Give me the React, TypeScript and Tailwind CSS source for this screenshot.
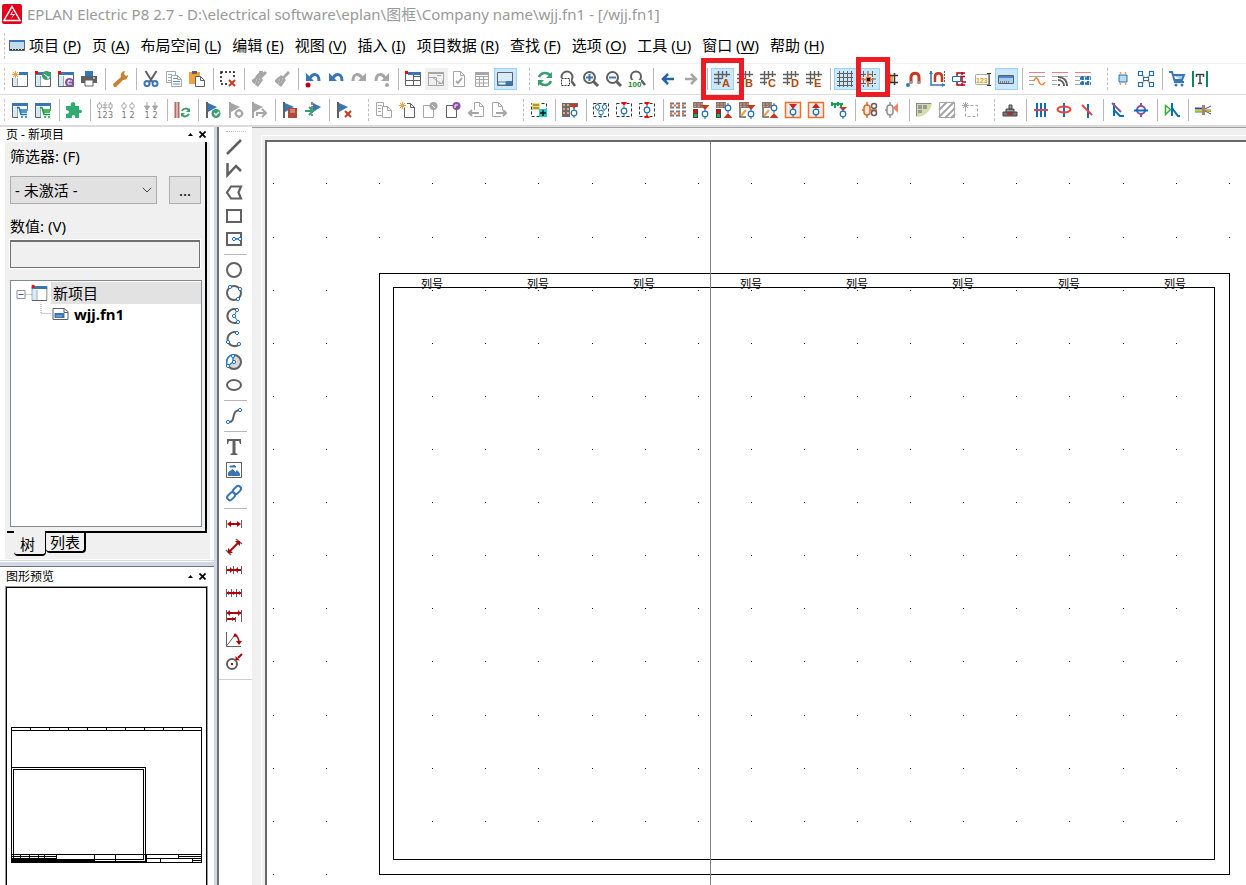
import React from 'react';
import { ChevronDown } from 'lucide-react';

const G = '#606060';
const L = '#a6a6a6';
const B = '#3a76b4';
const C = '#d2ebf9';
const R = '#c8381f';
const O = '#f0a040';
const T = '#0070b8';
const GR = '#3a9f70';

const Spark = ({ x = 0, y = 0, c = O }: { x?: number; y?: number; c?: string }) => (
  <path
    d={`M${x + 3.5} ${y}v7M${x} ${y + 3.5}h7M${x + 1} ${y + 1}l5 5M${x + 6} ${y + 1}l-5 5`}
    stroke={c}
    fill="none"
  />
);

const Win = () => (
  <>
    <path d="M.5 2.500h15v13H.5z" fill="#fff" stroke={G} />
    <path d="M1 5h4v10H1z" fill={C} />
    <path d="M0 1h16v3H0z" fill={B} />
    <path d="M5.500 5v10" stroke={L} />
  </>
);

const RedCorner = () => <path d="M0 0h3v3H0z" fill="red" />;

const Paper = ({ c = G, x = 0, y = 0 }: { c?: string; x?: number; y?: number }) => (
  <path
    d={`M${x + 0.5} ${y + 0.5}h6l4 4v10h-10zM${x + 6.5} ${y + 0.5}v4h4`}
    fill="#fff"
    stroke={c}
  />
);

const Flag = ({ c = B, p = G }: { c?: string; p?: string }) => (
  <>
    <path d="M1 0h2v16H1z" fill={p} />
    <path d="M3 1l9 4-9 5z" fill={c} />
  </>
);

const Cross = () => <path d="M9 9l6 6M15 9l-6 6" stroke={R} strokeWidth="2" />;

const Cart = ({ c = '#1976b8' }: { c?: string }) => (
  <path
    d="M5 5.500h2l2 7h6M8 8h8M8.500 10h6.500M10 14v2M14 14v2"
    stroke={c}
    strokeWidth="1.500"
    fill="none"
  />
);

const Brush = ({ c }: { c: string }) => (
  <>
    <path d="M14 0l2 2-6 6-2-2z" fill={c} />
    <path d="M1 9l6-5 5 5-5 7-6-5z" fill={c} />
    <path d="M5 9h1M7 11h1M4 12h1M8 8h1" stroke="#c8f0b8" />
  </>
);

const Magnifier = () => (
  <>
    <circle cx="6.500" cy="6.500" r="5.500" fill="none" stroke={G} strokeWidth="2" />
    <path d="M10.500 10.500l4.500 4.500" stroke={G} strokeWidth="3" />
  </>
);

const Dot = ({ x, y, r = 1.6 }: { x: number; y: number; r?: number }) => (
  <circle cx={x} cy={y} r={r} fill="#fff" stroke="#1f6fb5" />
);

const GridLetter = ({ l }: { l: string }) => (
  <>
    <path d="M4.500 0v14M8.500 0v8M12.500 0v6M0 3.500h16M0 7.500h8M0 11.500h7" stroke={G} strokeWidth="1.400" fill="none" />
    <text x="8" y="16" fontSize="11" fontWeight="700" fontFamily="Liberation Sans" fill="#b04a0c">
      {l}
    </text>
  </>
);

const Pins = ({ n, mixed, arrow }: { n: number; mixed?: boolean; arrow?: boolean }) => (
  <>
    {Array.from({ length: n }, (_, i) => {
      const x = n === 3 ? 2.5 + i * 5.5 : 4 + i * 8;
      return (
        <g key={i}>
          {arrow ? (
            <path d={`M${x} 0v8M${x - 2.5} 4h5l-2.500 4z`} fill={L} stroke={L} />
          ) : mixed && i === 1 ? (
            <path d={`M${x} 0v8M${x - 2.5} 3h5M${x - 2.5} 5.500h5`} stroke={L} />
          ) : (
            <>
              <path d={`M${x} 0v8`} stroke={L} />
              {mixed && i === 2 ? (
                <path d={`M${x - 1.5} 2h3v4h-3z`} fill="#fff" stroke={L} />
              ) : (
                <circle cx={x} cy="4" r="2.300" fill="#fff" stroke={L} />
              )}
            </>
          )}
          <text x={x} y="16" textAnchor="middle" fontSize="8" fontFamily="DejaVu Sans" fill="#777">
            {i + 1}
          </text>
        </g>
      );
    })}
  </>
);

const Dashed = () => (
  <rect x="0.5" y="1.500" width="15" height="13" fill="none" stroke="#333" strokeDasharray="3 2" />
);

const Strip = () => (
  <>
    <path d="M0 0h10v6H0z" fill="#777" />
    <path d="M1 2h2M4.500 2h2M8 2h2M1 4.500h2M4.500 4.500h2M8 4.500h2" stroke="#f08a60" strokeWidth="1.500" />
  </>
);

const Terminal = ({ x = 8, y = 8 }: { x?: number; y?: number }) => (
  <>
    <path d={`M${x} ${y - 5}v10`} stroke="#1f6fb5" />
    <circle cx={x} cy={y} r="2.800" fill="#fff" stroke="#1f6fb5" strokeWidth="1.200" />
  </>
);

const Device = ({ light, up }: { light?: boolean; up?: boolean }) => (
  <>
    <Strip />
    {light ? (
      <>
        <path d="M0 7h5v9H0z" fill="#444" />
        <path d="M1 8h3v3H1z" fill="red" />
        <path d="M1 12h3v3H1z" fill="#2eb34a" />
      </>
    ) : (
      <>
        <path d="M1 6v9h6" stroke={G} fill="none" strokeWidth="1.500" />
        <path d="M2 14l5-6" stroke={O} strokeWidth="2" />
      </>
    )}
    {up ? (
      <>
        <Terminal x={12} y={6} />
        <path d="M7.500 16l4.500-5 4.500 5z" fill={R} />
      </>
    ) : (
      <>
        <path d="M7.500 3h9L12 8z" fill={R} />
        <Terminal x={12} y={12} />
      </>
    )}
  </>
);

const Lines = () => (
  <>
    <path d="M0 1.500h16" stroke="#f08080" />
    <path d="M0 5.500h16M0 9.500h5M0 13.500h5" stroke={L} />
  </>
);

const DR = '#b00008';

const icons: Record<string, React.ReactNode> = {
  newProject: <><Win /><path d="M0 0h7v7H0z" fill="#fff" /><Spark /></>,
  openProject: <><Win /><RedCorner /><circle cx="11.500" cy="4.500" r="4.500" fill={GR} /><path d="M9 3l5 4M12 7h2V5" stroke="#fff" fill="none" /></>,
  projectProps: <><Win /><RedCorner /><circle cx="11.500" cy="11.500" r="4.500" fill="#8350a5" /><path d="M14 10h-4v3h4M12 9l-2 1" stroke="#fff" fill="none" /></>,
  printer: <><path d="M4 0h8v5H4z" fill={B} /><path d="M0 5h16v7H0z" fill={G} /><path d="M4 9h8v6H4z" fill="#fff" stroke={G} /><path d="M12 7h2" stroke="#fff" /></>,
  wrench: <path d="M1 13l8-7c-1-3 1-6 4-6l-1 3 2 2 2-1c0 4-3 5-5 5l-7 7-2 0z" fill="#c98232" />,
  cut: <><path d="M2.500 0l7 11M13.500 0l-7 11" stroke={G} strokeWidth="2" /><circle cx="4" cy="12.500" r="2.500" fill="none" stroke={B} strokeWidth="2" /><circle cx="12" cy="12.500" r="2.500" fill="none" stroke={B} strokeWidth="2" /></>,
  copy: <><path d="M.5.500h9v11h-9z" fill="#fff" stroke={L} /><path d="M2 3.500h4M2 6.500h3M2 9.500h3" stroke={L} /><path d="M5.500 4.500h6l4 4v7h-10zM11.500 4.500v4h4" fill="#fff" stroke={L} /><path d="M7 7.500h4M7 10.500h7M7 13h7" stroke="#5b92c8" /></>,
  paste: <><path d="M0 1h11v12H0z" fill={O} /><path d="M3 0h5v3H3z" fill={G} /><path d="M6.500 5.500h5l4 4v6h-9zM11.500 5.500v4h4" fill="#fff" stroke={G} /></>,
  deselect: <><rect x="1" y="1" width="13" height="12" fill="none" stroke="#111" strokeWidth="1.500" strokeDasharray="2 2" /><path d="M8 8h8v8H8z" fill="#fff" /><Cross /></>,
  brushMulti: <><Brush c={L} /><path d="M8 1l2 0-5 5M12 1l-4 5" stroke={L} strokeWidth="2" fill="none" /></>,
  brush: <Brush c={L} />,
  undoList: <><path d="M5 7C8 2 14 2 14 10" stroke={B} strokeWidth="3" fill="none" /><path d="M1 2v8h8z" fill={B} /><circle cx="3" cy="14" r="2.500" fill="#c00018" /></>,
  undo: <><path d="M5 7C8 2 14 2 14 10" stroke={B} strokeWidth="3" fill="none" /><path d="M1 2v8h8z" fill={B} /></>,
  redo: <><path d="M11 7C8 2 2 2 2 10" stroke={L} strokeWidth="3" fill="none" /><path d="M15 2v8H7z" fill={L} /></>,
  redoList: <><path d="M11 7C8 2 2 2 2 10" stroke={L} strokeWidth="3" fill="none" /><path d="M15 2v8H7z" fill={L} /><circle cx="13" cy="14" r="2" fill={L} /></>,
  workspace: <><path d="M.5 1.500h15v13H.5zM.5 9.500h15M8.500 3v12M8.500 5.500h7" fill="#fff" stroke={G} /><path d="M3 1h13v3H3z" fill={B} /><RedCorner /></>,
  hideWindow: <><path d="M.5 1.500h15v13H.5zM.5 6.500h8v8M5 7l9 6M10.500 12.500h4v-3M9 4.500h4" fill="none" stroke={L} /><path d="M0 1h16v2H0z" fill={L} /></>,
  checkPage: <><path d="M2.500.500h7l4 4v11h-11zM9.500.500v4h4" fill="#fff" stroke={L} /><path d="M5 10l2 2 4-5" stroke={L} strokeWidth="2" fill="none" /></>,
  table: <><path d="M1.500 1.500h13v14h-13zM1 5.500h13M1 8.500h13M1 12h13M5.500 5v10M9.500 5v10" stroke={L} fill="none" /><path d="M1 1h14v3H1z" fill={L} /></>,
  preview: <><path d="M.5 1.500h15v13H.5z" fill="#d9ecfa" stroke={G} /><path d="M1 11h8v3H1z" fill="#fff" stroke={B} /><path d="M9 10h6v4H9z" fill={B} /></>,
  refresh: <><path d="M2 6c2-5 8-5 11-2M14 10c-2 5-8 5-11 2" stroke={GR} strokeWidth="2.500" fill="none" /><path d="M15 1v6H9zM1 15V9h6z" fill={GR} /></>,
  zoomWindow: <><circle cx="7" cy="6" r="5.500" fill="none" stroke={G} strokeWidth="2" /><path d="M0 7h11v9H0z" fill="#fff" /><path d="M1.500 7.500h8v7h-8z" fill="none" stroke="#333" strokeDasharray="2 1" /><path d="M11.500 10l3.500 5" stroke={G} strokeWidth="2.500" /></>,
  zoomIn: <><Magnifier /><path d="M3 6.500h7M6.500 3v7" stroke={B} strokeWidth="2" /></>,
  zoomOut: <><Magnifier /><path d="M3 6.500h7" stroke={B} strokeWidth="2" /></>,
  zoom100: <><circle cx="7" cy="5.500" r="5" fill="none" stroke={G} strokeWidth="2" /><path d="M12 9l4 5" stroke={G} strokeWidth="2.500" /><path d="M0 9h12v7H0z" fill="#fff" /><text x="-1" y="16" fontSize="8" fontFamily="Liberation Sans" fontWeight="700" fill="#168a28">100</text></>,
  back: <path d="M8 3L3 8l5 5M3 8h11" stroke="#2464a4" strokeWidth="2.500" fill="none" />,
  forward: <path d="M8 3l5 5-5 5M13 8H2" stroke={L} strokeWidth="2.500" fill="none" />,
  gridA: <GridLetter l="A" />,
  gridB: <GridLetter l="B" />,
  gridC: <GridLetter l="C" />,
  gridD: <GridLetter l="D" />,
  gridE: <GridLetter l="E" />,
  grid: <path d="M2.500 0v16M6.500 0v16M10.500 0v16M14.500 0v16M0 2.500h16M0 6.500h16M0 10.500h16M0 14.500h16" stroke={G} />,
  gridSnap: <><path d="M3.500 0v16M12.500 0v16M0 3.500h16M0 12.500h16M0 8h3M13 8h3M8 0v3M8 13v3" stroke={G} strokeDasharray="6 1" /><path d="M8 2v13M2 8.500h12" stroke="#f07020" strokeWidth="1.500" /><path d="M6 6h5v5H6z" fill="#f07020" /><path d="M7 7h3v3H7z" fill="#111" /></>,
  align: <><path d="M3 4h7v8H3z" fill={O} /><path d="M11.500 2v12M6.500 2v12M3 4.500h12M3 11.500h12" stroke="#333" strokeWidth="1.500" /></>,
  magnet: <><path d="M5 12V6c0-5 8-5 8 0v6" stroke={R} strokeWidth="3" fill="none" /><path d="M3.500 10h3v3h-3zM11.500 10h3v3h-3z" fill="#999" /><circle cx="2" cy="14" r="2" fill={B} /></>,
  magnetAxis: <><path d="M2 0v14h14" stroke={B} strokeWidth="1.500" fill="none" /><path d="M6 11V6c0-5 7-5 7 0v5" stroke={R} strokeWidth="2.500" fill="none" /><path d="M0 3h4L2 0zM13 12v4l3-2z" fill={B} /><path d="M15.500 0v11" stroke={G} strokeDasharray="2 1" /></>,
  connector: <><path d="M5 5V2h8M5 10v4h8M8 5.500h5M10 5v6M10 11h4M10 1v3M10 12v3" stroke="#b00010" strokeWidth="1.500" fill="none" /><path d="M.5 5.500h8v5h-8z" fill="#fff" stroke="#1f6fb5" /></>,
  numbering: <><rect x=".5" y="3.500" width="14" height="10" rx="1" fill="#fff" stroke={L} /><text x="1" y="12" fontSize="7" fontFamily="Liberation Sans" fontWeight="700" fill="#d8a010">123</text><path d="M12 2.500h4M14 3v11M12 14.500h4" stroke="#333" /></>,
  card: <><path d="M.5 4.500h15v8H.5z" fill="#a8ccf0" stroke={G} /><path d="M1 5h14v2H1z" fill="#4a86d0" /><path d="M2 11h9" stroke="#333" strokeDasharray="1 1" /></>,
  lineWave: <><Lines /><path d="M5 10c2-6 4-2 5 1s4 4 6 0" stroke="#f08030" strokeWidth="1.500" fill="none" /></>,
  lineSignal: <><Lines /><path d="M6 14h2M6 9c3 0 6 2 6 6M6 6c5 0 9 3 9 9" stroke={G} strokeWidth="2" fill="none" /></>,
  lineGrid: <><Lines /><path d="M7.500 5v10M13 5v10M5 7.500h11M5 12.500h11" stroke="#2574b8" strokeWidth="2.500" strokeDasharray="4 1" /></>,
  node: <><path d="M4 4h8v7H4z" fill="#b9dcf0" stroke="#1f6fb5" /><path d="M5.500 1v2M10.500 1v2M5.500 12v2M10.500 12v2" stroke={O} strokeWidth="1.500" /></>,
  nodes: <><path d="M3 3l10 10M13 3L3 13" stroke={O} strokeWidth="1.500" /><path d="M.5.500h4v4h-4zM11.500.500h4v4h-4zM.5 11.500h4v4h-4zM11.500 11.500h4v4h-4zM5.500 6.500h5v3h-5z" fill="#fff" stroke="#1f6fb5" strokeWidth="1.200" /></>,
  shop: <><path d="M0 1h3l3 10h9M4 4h11l-2 5H5" stroke={B} strokeWidth="2" fill="#a9cdea" /><circle cx="7" cy="14" r="1.500" fill={B} /><circle cx="13" cy="14" r="1.500" fill={B} /></>,
  textFrame: <><path d="M0 0h2v16H0zM14 0h2v16h-2z" fill="#0a8a58" /><path d="M4 3.500h8M8 3v10M6 12.500h4M4.500 3v3M11.500 3v3" stroke="#444" strokeWidth="1.500" /></>,

  cartWin: <><Win /><path d="M6 7h10v9H6z" fill="#fff" /><Cart /></>,
  cartWinGreen: <><Win /><path d="M6 7h10v9H6z" fill="#fff" /><Cart c="#149a38" /></>,
  plugin: <path d="M0 4h5c-2-5 6-5 4 0h4v4c4-1 4 4 0 3v5H9c1-4-4-4-3 0H0v-4c4 0 4-4 0-4z" fill="#2faa70" />,
  numberMix: <Pins n={3} mixed />,
  numberPair: <Pins n={2} />,
  numberArrow: <Pins n={2} arrow />,
  syncRows: <><path d="M1.500 0v16M4.500 0v16" stroke="#b26a5e" strokeWidth="2" /><path d="M8 9c1-3 5-3 7-1M15 12c-2 3-5 3-7 1" stroke={GR} strokeWidth="2" fill="none" /><path d="M16 6v4h-4zM7 15v-4h4z" fill={GR} /></>,
  flagCheck: <><Flag /><circle cx="11" cy="11.500" r="4.500" fill={GR} /><path d="M9 11l2 2 3-3" stroke="#fff" strokeWidth="1.500" fill="none" /></>,
  flagGear: <><Flag c={L} p={L} /><circle cx="11" cy="11.500" r="3" fill="#fff" stroke={L} strokeWidth="2" /><path d="M11 7v2M11 14v2M6.500 11.500h2M13.500 11.500h2" stroke={L} strokeWidth="2" /></>,
  flagNext: <><Flag c={L} p={L} /><path d="M6 14v-3h8M11 7l4 4-4 4" stroke={L} strokeWidth="2" fill="none" /></>,
  flagBook: <><Flag /><path d="M6 6h9v10H6z" fill="#b04a38" /><path d="M8 8h5M8 10h5" stroke="#f0c0b0" /></>,
  flagGo: <><path d="M8 1l8 4-8 5z" fill={B} /><path d="M7 0v14" stroke={G} strokeWidth="1.500" strokeDasharray="3 1" /><path d="M0 9h7M4 5l4 4-4 4" stroke={GR} strokeWidth="2" fill="none" /></>,
  flagDelete: <><Flag /><Cross /></>,
  pageList: <><path d="M.5.500h7v13h-7zM2 3.500h4M2 6.500h3M2 9.500h3" stroke={L} fill="#fff" /><path d="M6.500 4.500h5l4 4v7h-9zM11.500 4.500v4h4" fill="#fff" stroke={L} /></>,
  pageNew: <><Paper x={5} y={1} /><path d="M3 0h5v6H3z" fill="#fff" /><Spark /></>,
  pageOpen: <><path d="M1.500 3.500h10v12h-10z" fill="#fff" stroke={L} /><circle cx="11.500" cy="4" r="4" fill={L} /><path d="M10 3l3 3" stroke="#fff" /></>,
  pageProps: <><path d="M1.500 3.500h10v12h-10z" fill="#fff" stroke={G} /><circle cx="11.500" cy="4" r="4" fill="#8350a5" /><path d="M13 3h-3v3" stroke="#fff" fill="none" /></>,
  pagePrev: <><path d="M6.500 8V.500h5l4 4v10h-9V14M11.500.500v4h4" fill="none" stroke={L} /><path d="M4 8l-3 3 3 3M1 11h10" stroke={L} strokeWidth="2" fill="none" /></>,
  pageNext: <><path d="M10 14.500H1.500V.500h6l4 4V8M7.500.500v4h4" fill="none" stroke={L} /><path d="M12 8l3 3-3 3M15 11H5" stroke={L} strokeWidth="2" fill="none" /></>,
  macro: <><Dashed /><path d="M1 1h8v7H1z" fill="#f6d860" /><path d="M2 3h6M2 6h6" stroke="#555" /><path d="M8 7h8v8H8z" fill="#20c8d0" /><path d="M12 8v6M9 11h6" stroke="#111" strokeWidth="1.500" /></>,
  terminals: <><path d="M0 1h16v4H0zM0 5h8v10H0z" fill="#6a6a6a" /><path d="M1 3h2M5 3h2M1 7h2M5 7h2M1 11h2M5 11h2" stroke="#f4a070" strokeWidth="2" /><path d="M8 2h8l-4 5z" fill={R} /><Terminal x={12} y={11} /></>,
  boxThree: <><Dashed /><path d="M5 1v8M11 1v8M8 8v8" stroke="#1f6fb5" /><Dot x={4.500} y={5} r={2.300} /><Dot x={11.500} y={5} r={2.300} /><Dot x={8} y={10.500} r={2.300} /></>,
  boxOne: <><Dashed /><Terminal y={9} /><path d="M5 0h6L8 4z" fill="red" /></>,
  boxTwo: <><Dashed /><Terminal /><path d="M5 0h6L8 3.500zM5 16h6l-3-3.500z" fill="red" /></>,
  stripAll: <><path d="M0 1.500h16M0 5.500h16M0 9.500h16M0 13.500h16" stroke="#777" strokeWidth="2" strokeDasharray="4 2" /><path d="M0 3.500h16M0 11.500h16" stroke="#e86838" strokeWidth="2" strokeDasharray="2 2" /></>,
  dev1: <Device light />,
  dev2: <Device light up />,
  dev3: <Device />,
  dev4: <Device up />,
  frameDown: <><path d="M.5.500h15v15H.5z" fill="#ececec" stroke="#f07028" strokeWidth="1.500" /><Terminal y={10} /><path d="M4 2h8L8 7z" fill="#d02020" /></>,
  frameUp: <><path d="M.5.500h15v15H.5z" fill="#ececec" stroke="#f07028" strokeWidth="1.500" /><Terminal y={10} /><path d="M4 6h8L8 1z" fill="#d02020" /></>,
  coil: <><path d="M0 2h12M1 0v4M4 1v5M7 0v4M10 1v5" stroke="#14a058" strokeWidth="2" /><path d="M8 5h8l-4 4z" fill={R} /><Terminal x={12} y={12} /></>,
  plug: <><path d="M5 0v16M0 8h2M7 8h8" stroke="#d86a28" strokeWidth="1.500" /><rect x="2" y="3" width="6" height="10" rx="3" fill="#fbe5d8" stroke="#d86a28" strokeWidth="1.500" /><circle cx="12" cy="4" r="2.500" fill="#fff" stroke={G} strokeWidth="1.500" /><circle cx="12" cy="11" r="2.500" fill="#fff" stroke={G} strokeWidth="1.500" /></>,
  plugEnd: <><path d="M5 0v16M0 8h2" stroke="#909090" strokeWidth="1.500" /><rect x="2" y="3" width="6" height="10" rx="3" fill="#faf3e8" stroke="#909090" strokeWidth="1.500" /><path d="M13 1v10l-5-5z" fill="#f08068" /></>,
  corner: <><path d="M0 1h16c-1 8-8 14-16 14z" fill="#d5dcaa" /><path d="M0 1h15v1H0zM0 1h1v13H0z" fill="#888" /><path d="M2 3h4v4H2zM7 3h4v4H7zM2 8h4v3H2z" fill="#9a9a9a" /></>,
  hatch: <><path d="M.5.500h15v15H.5z" fill="#fff" stroke={L} /><path d="M0 8l8-8M0 15L15 0M6 16L16 6M12 16l4-4" stroke={L} strokeWidth="2" /></>,
  dashBox: <><path d="M3.500 3.500h12v11h-12z" fill="none" stroke={L} strokeDasharray="3 2" /><path d="M0 0h7v7H0z" fill="#fff" /><Spark c={L} /></>,
  stamp: <><path d="M1 10h14v4H1z" fill="#777" stroke="#444" /><path d="M4 7h8v3H4zM7 3h3v4H7z" fill="#999" stroke="#444" /><path d="M5 11h6v2H5z" fill="#b03030" /></>,
  triple: <><path d="M4 1v14M8 1v14M12 1v14" stroke={T} strokeWidth="2" /><path d="M1 8h14" stroke="#f04040" strokeWidth="2" /></>,
  ring: <><path d="M8 1v14" stroke={T} strokeWidth="2" /><ellipse cx="8" cy="7.500" rx="6.500" ry="3" fill="none" stroke="#f04040" strokeWidth="2" /></>,
  slash: <><path d="M9 2v14" stroke={T} strokeWidth="2" /><path d="M3 3l10 10" stroke="#f04040" strokeWidth="2" /></>,
  angle: <><path d="M4 1v13M4 8l6 6h4" stroke={T} strokeWidth="2" fill="none" /><path d="M2 1l9 9" stroke="#8a50a8" strokeWidth="2" /></>,
  target: <><path d="M8 1v14" stroke="#8a50a8" strokeWidth="2" /><circle cx="8" cy="8" r="4" fill="#fff" stroke="#8a50a8" strokeWidth="2" /><path d="M1 8.500h14" stroke={T} strokeWidth="2" /></>,
  branch: <><path d="M1.500 3.500l5 4-5 5z" fill="#fff" stroke="#30b030" strokeWidth="1.500" /><path d="M8 1v13M8 6l6 8h2" stroke={T} strokeWidth="2" fill="none" /></>,
  cable: <><path d="M0 6.500h8" stroke="#2050c0" strokeWidth="2" /><path d="M0 8.500h8" stroke="#e8c010" strokeWidth="2" /><path d="M0 10h8M10 8.500l6 1" stroke="#20a040" /><path d="M10 7l6-3" stroke="#2050c0" /><path d="M10 8h6" stroke="#e8a010" strokeWidth="1.500" /><path d="M10 9l6 3" stroke="#555" /><path d="M7 3h3v10H7z" fill="#a88070" /></>,

  line: <path d="M1 15L15 1" stroke={G} strokeWidth="2.500" />,
  polyline: <path d="M1.500 1v12L10 4l5 5" stroke={G} strokeWidth="2.500" fill="none" />,
  polygon: <path d="M5 1.500h10l-2.500 6 2.500 6H5l-4-6z" stroke={G} strokeWidth="2.200" fill="none" />,
  rect: <path d="M1 2h14v12H1z" stroke={G} strokeWidth="2" fill="none" />,
  rectCenter: <><path d="M1 2h14v12H1z" stroke={G} strokeWidth="2" fill="none" /><path d="M8 8h6" stroke="#1f6fb5" strokeWidth="1.500" /><Dot x={8} y={8} /><Dot x={14} y={8} /></>,
  circle: <circle cx="8" cy="8" r="7" stroke={G} strokeWidth="2" fill="none" />,
  circle3: <><circle cx="8" cy="8" r="7" stroke={G} strokeWidth="2" fill="none" /><Dot x={4} y={2} /><Dot x={14} y={4} /><Dot x={12} y={14} /></>,
  arcCenter: <><path d="M11 1.500a7 7 0 1 0 0 13" stroke={G} strokeWidth="2" fill="none" /><path d="M11 2L8 8l4 5" stroke="#1f6fb5" fill="none" /><Dot x={11} y={2} /><Dot x={8} y={8} /><Dot x={12} y={14} /></>,
  arc3: <><path d="M11 1.500a7 7 0 1 0 2 12" stroke={G} strokeWidth="2" fill="none" /><Dot x={11} y={2} /><Dot x={2} y={11} /><Dot x={13} y={13} /></>,
  sector: <><circle cx="8" cy="8" r="7" stroke={G} strokeWidth="2" fill="#d8d8d8" /><path d="M2 12A7 7 0 0 1 7 1v7z" fill="#fff" stroke="#2b7ec8" strokeWidth="1.500" /><Dot x={7} y={2} /><Dot x={8} y={8} /><Dot x={2} y={12} /></>,
  ellipse: <ellipse cx="8" cy="8" rx="7" ry="5" stroke={G} strokeWidth="2" fill="none" />,
  spline: <><path d="M2 14c9 1 2-12 12-12" stroke={G} strokeWidth="2" fill="none" /><Dot x={2} y={14} /><Dot x={14} y={2} /></>,
  text: <path d="M1 0h14v5h-1l-1-3H9.500v12l2 1v1h-7v-1l2-1V2H3L2 5H1z" fill={G} />,
  image: <><path d="M.5.500h15v15H.5z" fill="#fff" stroke={G} /><path d="M2.500 13.500v-3l4-3 3 3 1.500-2 2.500 3v2zM4 4h3l1-1 2 2H4z" fill={B} stroke={B} /></>,
  link: <><rect x="6.500" y="2.200" width="9" height="5.500" rx="2.700" transform="rotate(-45 11 5)" fill="none" stroke={B} strokeWidth="2" /><rect x="0.500" y="8.500" width="9" height="5.500" rx="2.700" transform="rotate(-45 5 11)" fill="none" stroke={B} strokeWidth="2" /></>,
  dimLinear: <><path d="M.5 4v8M15.500 4v8" stroke={G} /><path d="M3 8h10" stroke={DR} strokeWidth="2" /><path d="M1 8l4-3v6zM15 8l-4-3v6z" fill={DR} /></>,
  dimAligned: <><path d="M0 11l5 5M10 0l6 5" stroke={G} strokeWidth="1.500" /><path d="M4 12l8-8" stroke={DR} strokeWidth="2" /><path d="M2 14V9l5 5zM14 2v5L9 2z" fill={DR} /></>,
  dimChain: <><path d="M.5 4v8M7.500 4v8M15.500 4v8" stroke={G} /><path d="M1 8h14" stroke={DR} strokeWidth="2" /><path d="M4 5v6l3-3zM12 5v6l-3-3z" fill={DR} /></>,
  dimIncr: <><path d="M.5 4v8M5.500 4v8M10.500 4v8M15.500 4v8" stroke={G} /><path d="M1 8h14" stroke={DR} strokeWidth="2" /><path d="M2 6v4l3-2zM7 6v4l3-2zM14 6v4l-3-2z" fill={DR} /></>,
  dimBase: <><path d="M.5 2v12M15.500 2v12M9.500 9v5" stroke={G} /><path d="M1 5h14M1 11h8" stroke={DR} strokeWidth="2" /><path d="M1 5l3-3v6zM15 5l-3-3v6zM9 11l-3-2v4z" fill={DR} /></>,
  dimAngle: <><path d="M.5 1v14.500H15M.5 15L9 4" stroke={G} fill="none" /><path d="M8 4c4 1 5 4 5 8" stroke={DR} strokeWidth="1.500" fill="none" /><path d="M7 6l2-4 3 3zM10 10h6l-3 4z" fill={DR} /></>,
  dimRadius: <><circle cx="6" cy="10" r="5" stroke={G} strokeWidth="2" fill="none" /><path d="M5 9h2v2H5z" fill={DR} /><path d="M16 0l-4 4" stroke={DR} strokeWidth="2" /><path d="M9.500 6V2l4.500 4.500z" fill={DR} /></>,
};

// '|' draws a separator, ':' starts a new toolbar group
const mainBar = [
  'newProject', 'openProject', 'projectProps', 'printer', '|', 'wrench', '|', 'cut', 'copy', 'paste', '|',
  'deselect', '|', 'brushMulti', 'brush', '|', 'undoList', 'undo', 'redo', 'redoList', '|',
  'workspace', 'hideWindow', 'checkPage', 'table', 'preview', ':',
  'refresh', 'zoomWindow', 'zoomIn', 'zoomOut', 'zoom100', '|', 'back', 'forward', '|',
  'gridA', 'gridB', 'gridC', 'gridD', 'gridE', '|',
  'grid', 'gridSnap', 'align', 'magnet', 'magnetAxis', 'connector', 'numbering', 'card', '|',
  'lineWave', 'lineSignal', 'lineGrid', ':', 'node', 'nodes', '|', 'shop', 'textFrame',
];

const editBar = [
  'cartWin', 'cartWinGreen', '|', 'plugin', '|', 'numberMix', 'numberPair', 'numberArrow', '|', 'syncRows', '|',
  'flagCheck', 'flagGear', 'flagNext', '|', 'flagBook', 'flagGo', '|', 'flagDelete', ':',
  'pageList', 'pageNew', 'pageOpen', 'pageProps', 'pagePrev', 'pageNext', ':', 'macro', '|', 'terminals', '|',
  'boxThree', 'boxOne', 'boxTwo', '|', 'stripAll', 'dev1', 'dev2', 'dev3', 'dev4', 'frameDown', 'frameUp', 'coil', '|',
  'plug', 'plugEnd', '|', 'corner', 'hatch', 'dashBox', ':', 'stamp', '|', 'triple', 'ring', 'slash', '|',
  'angle', 'target', '|', 'branch', '|', 'cable',
];

const drawBar = [
  'line', 'polyline', 'polygon', 'rect', 'rectCenter', '|',
  'circle', 'circle3', 'arcCenter', 'arc3', 'sector', 'ellipse', '|', 'spline', '|', 'text', 'image', 'link', '|',
  'dimLinear', 'dimAligned', 'dimChain', 'dimIncr', 'dimBase', 'dimAngle', 'dimRadius',
];

const active = ['preview', 'gridA', 'grid', 'gridSnap', 'card'];

const menus = [
  ['项目', 'P'], ['页', 'A'], ['布局空间', 'L'], ['编辑', 'E'], ['视图', 'V'], ['插入', 'I'],
  ['项目数据', 'R'], ['查找', 'F'], ['选项', 'O'], ['工具', 'U'], ['窗口', 'W'], ['帮助', 'H'],
];

const Icon = ({ name }: { name: string }) => (
  <svg viewBox="0 0 16 16" className="w-4 h-4 shrink-0 overflow-visible">
    {icons[name]}
  </svg>
);

const ToolBar = ({ items }: { items: string[] }) => (
  <div role="toolbar" className="flex items-center h-[30px] pl-1 shrink-0">
    <span className="w-[5px] h-[22px] border-l border-dashed border-[#c8c8c8] shrink-0"></span>
    {items.map((item, index) => {
      if (item === '|') {
        return (
          <span key={index} className="w-2 h-[22px] flex justify-center shrink-0">
            <span className="w-px bg-[#b8b8b8]"></span>
          </span>
        );
      }
      if (item === ':') {
        return (
          <span key={index} className="w-[17px] h-[22px] flex justify-end pr-1 shrink-0">
            <span className="border-l border-dashed border-[#c0c0c0]"></span>
          </span>
        );
      }
      const look = active.includes(item)
        ? 'bg-[#cce8ff] border-[#99d1ff]'
        : item === 'hideWindow'
          ? 'bg-[#f0f0f0] border-[#f0f0f0]'
          : 'border-transparent';
      return (
        <button
          key={index}
          aria-label={item}
          className={`relative flex items-center w-[23px] h-[22px] pl-[2px] border shrink-0 ${look}`}
        >
          <Icon name={item} />
          {item === 'gridA' && (
            <span className="absolute z-10 -inset-[11px] border-5 border-[#ed1c24]"></span>
          )}
          {item === 'gridSnap' && (
            <span className="absolute z-10 -top-3 -bottom-2 -left-[2px] -right-[11px] border-5 border-[#ed1c24]"></span>
          )}
        </button>
      );
    })}
  </div>
);

const PanelTitle = ({ title }: { title: string }) => (
  <div className="flex items-center h-[15px] pl-[6px] pr-[6px] text-xs text-black bg-white shrink-0">
    <span className="flex-1">{title}</span>
    <button aria-label="float" className="w-3 h-3 flex items-center justify-center">
      <svg viewBox="0 0 5 3" className="w-[5px] h-[3px]"><path d="M0 3h5L2.500 0z" /></svg>
    </button>
    <button aria-label="close" className="w-3 h-3 flex items-center justify-center">
      <svg viewBox="0 0 7 7" className="w-[7px] h-[7px]"><path d="M.5.500l6 6M6.500.500l-6 6" stroke="#000" strokeWidth="1.700" /></svg>
    </button>
  </div>
);

const PagePanel = () => (
  <section className="h-[57%] flex flex-col shrink-0">
    <PanelTitle title="页 - 新项目" />
    <div className="flex-1 min-h-0 flex flex-col ml-[5px] mr-1 bg-[#f0f0f0]">
      <div className="flex-1 min-h-0 flex flex-col ml-[2px] mr-[3px] px-[3px] border-r-2 border-b-2 border-black">
        <label htmlFor="filter" className="mt-1 leading-5">筛选器: (F)</label>
        <div className="flex items-center justify-between mt-[10px] pr-px">
          <div className="relative w-[147px]">
            <select
              id="filter"
              className="appearance-none w-full h-7 pl-1 bg-[#e1e1e1] border border-[#adadad] text-black"
            >
              <option>- 未激活 -</option>
            </select>
            <ChevronDown className="absolute right-[2px] top-[6px] w-4 h-4 text-[#444] pointer-events-none" strokeWidth={1.5} />
          </div>
          <button className="w-8 h-7 bg-[#e1e1e1] border border-[#adadad] leading-5">...</button>
        </div>
        <label htmlFor="value" className="mt-3 leading-5">数值: (V)</label>
        <input
          id="value"
          type="text"
          className="h-7 mt-1 mr-[2px] bg-[#f0f0f0] border border-t-2 border-[#707070] outline outline-white"
        />
        <div role="tree" className="flex-1 min-h-0 mt-3 mb-1 bg-white border border-[#828790]">
          <div role="treeitem" className="flex items-center h-[23px] pl-[5px] pt-px">
            <svg viewBox="0 0 34 16" className="w-[35px] h-4 shrink-0">
              <path d="M.5 5.500h8v8h-8z" fill="#fff" stroke="#919191" />
              <path d="M2 9.500h5" stroke="#3355aa" />
              <path d="M9 9.500h8" stroke="#999" strokeDasharray="1 1" />
              <svg x="15" y="0" width="16" height="16"><Win /><RedCorner /></svg>
            </svg>
            <span className="flex-1 h-[22px] pl-[2px] bg-[#e2e2e2] leading-[22px]">新项目</span>
          </div>
          <div role="treeitem" className="flex items-center h-5 pl-[28px]">
            <svg viewBox="0 0 34 20" className="w-[35px] h-5 shrink-0">
              <path d="M1.500 0v9.500H12" fill="none" stroke="#999" strokeDasharray="1 1" />
              <path d="M13.500 4.500h11l4 3v8h-15z" fill="#fff" stroke={G} />
              <path d="M24.500 4.500v4h4" fill="none" stroke={G} />
              <path d="M15 9h10v5H15z" fill={B} />
              <path d="M17 12h6" stroke="#fff" strokeDasharray="1 1" />
            </svg>
            <span className="font-bold">wjj.fn1</span>
          </div>
        </div>
      </div>
      <div role="tablist" className="flex items-start h-[26px] pl-[9px] shrink-0">
        <button role="tab" className="w-8 h-[25px] -mt-[2px] bg-[#f0f0f0] border-r border-b-2 border-black rounded-b text-left pl-[6px] leading-[26px]">
          树
        </button>
        <button role="tab" className="w-10 h-5 bg-[#f0f0f0] border-r-2 border-b-2 border-black rounded-b leading-[18px]">
          列表
        </button>
      </div>
    </div>
  </section>
);

const PreviewPanel = () => (
  <section className="flex-1 min-h-0 flex flex-col">
    <div className="mt-px h-px bg-[#d8d8d8] shrink-0"></div>
    <div className="h-1 mt-px bg-[#d0d8e8] border-b border-[#707070] box-content shrink-0"></div>
    <div className="pt-[2px] shrink-0">
      <PanelTitle title="图形预览" />
    </div>
    <div className="flex-1 min-h-0 ml-[5px] mr-[6px] mt-[2px] border-t border-x border-[#999]">
      <div className="h-full border-t border-x border-black bg-white overflow-hidden">
        <svg className="w-full h-full" shapeRendering="crispEdges">
          <g fill="none" stroke="#000">
            <path d="M4.500 139.500h190v135h-190zM4.500 142.500h190" />
            <path d="M23.500 140v3M42.500 140v3M61.500 140v3M80.500 140v3M99.500 140v3M118.500 140v3M137.500 140v3M156.500 140v3M175.500 140v3" />
            <path d="M4.500 179.500h134v94h-134zM6.500 181.500h130v90h-130z" />
            <path d="M5 266.500h190M5 268.500h45M5 270.500h45M13.500 267v8M22.500 267v8M31.500 267v8M37.500 267v8M49.500 267v8M87.500 267v8M108.500 267v8M139.500 267v8M68.500 272v3M139 270.500h55M153.500 271v4M171.500 267v4M172 268.500h22M185.500 271v4M186 272.500h9" />
            <path d="M5 272h82" strokeWidth="2" />
          </g>
        </svg>
      </div>
    </div>
  </section>
);

const dotCols = Array.from({ length: 19 }, (_, i) => Math.round(5.9 + i * 53.1));
const dotRows = Array.from({ length: 14 }, (_, i) => Math.round(41.4 + i * 53.12));
const labelCols = Array.from({ length: 8 }, (_, i) => Math.round(154 + i * 106.2));

const Sheet = () => (
  <svg className="w-full h-full bg-white" shapeRendering="crispEdges">
    {dotRows.map((y) => dotCols.map((x) => <rect key={`${x}-${y}`} x={x} y={y} width="1" height="1" />))}
    <g fill="none" stroke="#000">
      <rect x="112.500" y="131.500" width="850" height="601" />
      <rect x="126.500" y="145.500" width="821" height="572" />
    </g>
    {labelCols.map((x) => (
      <text key={x} x={x} y="146" fontSize="11" fill="#000">列号</text>
    ))}
    <path d="M443.500 0v2000" stroke="#808080" />
  </svg>
);

const App: React.FC = () => {
  return (
    <div className="h-screen flex flex-col overflow-hidden bg-white text-black text-[15px] font-['Noto_Sans','Noto_Sans_CJK_SC',sans-serif]">
      <header className="shrink-0">
        <div className="flex items-center h-[30px] pl-[2px] pb-[2px] gap-[5px] text-[#999] whitespace-nowrap">
          <svg viewBox="0 0 20 20" className="w-5 h-5 shrink-0">
            <rect width="20" height="20" rx="2" fill="#e2001a" />
            <path d="M10 2.500l8 14H2z" fill="none" stroke="#fff" strokeWidth="1.500" />
            <path d="M11 6l-3 5h3l-2 4 4-5h-3z" fill="#fff" />
          </svg>
          <h1>EPLAN Electric P8 2.7 - D:\electrical software\eplan\图框\Company name\wjj.fn1 - [/wjj.fn1]</h1>
        </div>
        <nav className="flex items-center h-[33px] pl-1 pb-[2px] gap-[11px] whitespace-nowrap">
          <span className="flex items-center gap-1 -mr-[7px]">
            <span className="h-[26px] border-l border-dashed border-[#c8c8c8]"></span>
            <svg viewBox="0 0 16 12" className="w-4 h-3">
              <path d="M.5.500h15v10H.5z" fill="#c4daf0" stroke={G} />
              <path d="M0 0h16v2H0z" fill={B} />
              <path d="M1 9.500h14" stroke="#333" strokeDasharray="2 1" />
            </svg>
          </span>
          {menus.map(([label, key]) => (
            <button key={key}>
              {label} (<span className="underline underline-offset-2">{key}</span>)
            </button>
          ))}
        </nav>
        <div className="border-t border-[#f0f0f0]">
          <ToolBar items={mainBar} />
        </div>
        <div className="border-t border-b-2 border-[#dcdcdc]">
          <ToolBar items={editBar} />
        </div>
      </header>

      <main className="flex-1 min-h-0 flex">
        <aside className="w-[214px] flex flex-col shrink-0">
          <PagePanel />
          <PreviewPanel />
        </aside>
        <div className="w-[5px] bg-[#d0d8e8] border-r-2 border-[#707070] shrink-0"></div>
        <div className="w-[33px] flex flex-col items-center shrink-0">
          <span className="w-5 mt-1 mb-[3px] border-t border-dotted border-[#c0c0c0]"></span>
          {drawBar.map((item, index) =>
            item === '|' ? (
              <span key={index} className="w-[23px] h-2 flex items-center shrink-0">
                <span className="w-full h-px bg-[#b8b8b8]"></span>
              </span>
            ) : (
              <button key={index} aria-label={item} className="w-[23px] h-[23px] pl-[2px] flex items-center shrink-0">
                <Icon name={item} />
              </button>
            )
          )}
          <span className="w-full mt-[6px] border-t border-[#d0d0d0]"></span>
        </div>
        <div className="flex-1 min-w-0 bg-[#f0f0f0] border-t border-[#a0a0a0] pl-[9px] pt-[7px]">
          <div className="h-full border-t border-l border-white pl-[3px] pt-1">
            <div className="h-full border-t-2 border-l-2 border-[#696969] overflow-hidden">
              <Sheet />
            </div>
          </div>
        </div>
      </main>
    </div>
  );
};

export default App;
